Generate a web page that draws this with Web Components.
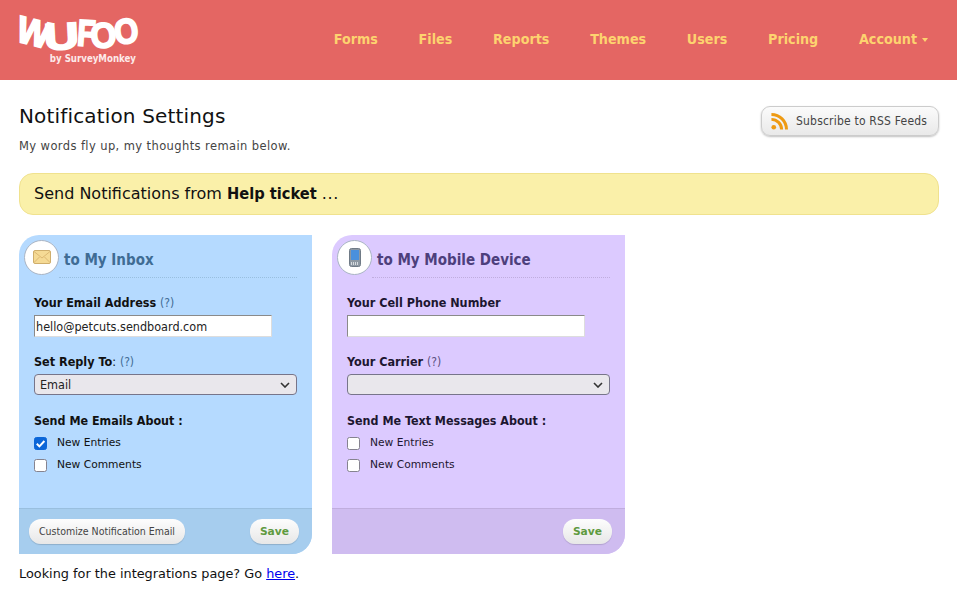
<!DOCTYPE html>
<html lang="en">
<head>
<meta charset="utf-8">
<title>Notification Settings</title>
<style>
  html, body { margin: 0; background: #fff; }
  body { font-family: "DejaVu Sans", sans-serif; color: #111; }
</style>
</head>
<body>
<wf-header></wf-header>
<wf-page>
  <wf-title slot="title" heading="Notification Settings" sub="My words fly up, my thoughts remain below."></wf-title>
  <wf-rss slot="action">Subscribe to RSS Feeds</wf-rss>
  <wf-banner slot="banner">Send Notifications from <b>Help ticket</b> <span style="letter-spacing:.6px">...</span></wf-banner>

  <wf-card slot="cards" heading="to My Inbox" theme="inbox">
    <wf-icon slot="icon" name="mail"></wf-icon>
    <wf-field label="Your Email Address" colon="" help="(?)" type="text" value="hello@petcuts.sendboard.com"></wf-field>
    <wf-field label="Set Reply To" colon=":" help="(?)" type="select" value="Email"></wf-field>
    <wf-checks heading="Send Me Emails About :">
      <wf-check checked>New Entries</wf-check>
      <wf-check>New Comments</wf-check>
    </wf-checks>
    <wf-btn slot="footer-left">Customize Notification Email</wf-btn>
    <wf-btn slot="footer-right" save>Save</wf-btn>
  </wf-card>

  <wf-card slot="cards" heading="to My Mobile Device" theme="mobile">
    <wf-icon slot="icon" name="phone"></wf-icon>
    <wf-field label="Your Cell Phone Number" type="text" value=""></wf-field>
    <wf-field label="Your Carrier" help="(?)" type="select" value=""></wf-field>
    <wf-checks heading="Send Me Text Messages About :">
      <wf-check>New Entries</wf-check>
      <wf-check>New Comments</wf-check>
    </wf-checks>
    <wf-btn slot="footer-right" save>Save</wf-btn>
  </wf-card>

  <span slot="foot">Looking for the integrations page? Go <a href="#" style="color:#0000ee">here</a>.</span>
</wf-page>

<script>
function define(name, html) {
  customElements.define(name, class extends HTMLElement {
    connectedCallback() {
      if (this.shadowRoot) return;
      this.attachShadow({ mode: "open" });
      this.shadowRoot.innerHTML = typeof html === "function" ? html(this) : html;
    }
  });
}

const COND = `"DejaVu Sans Condensed", "DejaVu Sans", sans-serif`;
const NAV = ["Forms", "Files", "Reports", "Themes", "Users", "Pricing"];
const CHEVRON = "data:image/svg+xml," + encodeURIComponent('<svg xmlns="http://www.w3.org/2000/svg" width="10" height="6"><path d="M1 1l4 4 4-4" fill="none" stroke="#333" stroke-width="1.6"/></svg>');
const TICK = "data:image/svg+xml," + encodeURIComponent('<svg xmlns="http://www.w3.org/2000/svg" width="13" height="13"><path d="M2.8 6.8l2.6 2.6 5-5.4" fill="none" stroke="#fff" stroke-width="2"/></svg>');

define("wf-header", `
  <style>
    :host { display: flex; height: 80px; background: #e46663; justify-content: space-between; align-items: center; padding: 0 29px 0 19px; }
    .logo { display: flex; flex-direction: column; width: 120px; }
    .word { position: relative; height: 35px; color: #fff; font: 700 37px/34px "Liberation Sans", sans-serif; -webkit-text-stroke: 2px #fff; }
    .word span { position: absolute; top: 0; display: block; }
    .w { left: -3px; transform: rotate(14deg) scaleX(.95); }
    .u { left: 29px; top: 4px !important; transform: rotate(-3deg) scaleX(1.3); }
    .f { left: 56px; top: 1px !important; transform: rotate(4deg) scaleX(.8); }
    .o1 { left: 70px; top: 3px !important; transform: rotate(-6deg) scale(.9, .95); }
    .o2 { left: 93px; top: -1px !important; transform: rotate(-6deg) scale(.84, .95); }
    .by { font: 700 9.6px/12px ${COND}; color: #fdeaea; margin: 2px 3px 0 0; text-align: right; }
    nav { display: flex; gap: 40.7px; margin-top: -2px; font: 700 14.2px/18px ${COND}; color: #fdd36f; white-space: nowrap; }
    .caret { display: inline-block; width: 0; height: 0; margin-left: 5px; border: 3px solid transparent; border-top: 4px solid #fdd36f; border-bottom: 0; vertical-align: 2px; }
  </style>
  <div class="logo">
    <div class="word"><span class="w">W</span><span class="u">U</span><span class="f">F</span><span class="o1">O</span><span class="o2">O</span></div>
    <div class="by">by SurveyMonkey</div>
  </div>
  <nav>${NAV.map(n => `<div>${n}</div>`).join("")}<div>Account<span class="caret"></span></div></nav>
`);

define("wf-page", `
  <style>
    :host { display: block; padding: 26px 18px 0 19px; }
    .top { display: flex; justify-content: space-between; align-items: flex-start; height: 67px; }
    .cards { display: flex; gap: 20px; margin-top: 20px; }
    .foot { font-size: 12.85px; line-height: 16px; margin-top: 12px; color: #111; }
  </style>
  <div class="top"><slot name="title"></slot><slot name="action"></slot></div>
  <slot name="banner"></slot>
  <div class="cards"><slot name="cards"></slot></div>
  <div class="foot"><slot name="foot"></slot></div>
`);

define("wf-title", el => `
  <style>
    :host { display: block; }
    h1 { margin: -1px 0 0; font: 400 20px/22px "DejaVu Sans", sans-serif; letter-spacing: .16px; color: #111; }
    p { margin: 11px 0 0; font: 400 11.5px/16px "DejaVu Sans", sans-serif; letter-spacing: .4px; color: #444; }
  </style>
  <h1>${el.getAttribute("heading")}</h1>
  <p>${el.getAttribute("sub")}</p>
`);

define("wf-rss", `
  <style>
    :host { display: flex; align-items: center; gap: 8px; box-sizing: border-box; width: 178px; height: 30px; padding: 0 0 0 9px; border: 1px solid #ccc; border-radius: 9px;
      background: linear-gradient(#fbfbfb, #e9e9e9); box-shadow: 0 1px 2px rgba(0,0,0,.25); font: 400 12px/16px ${COND}; letter-spacing: .2px; color: #444; }
    svg { width: 17px; height: 17px; flex: none; }
  </style>
  <svg viewBox="0 0 16 16"><circle cx="2.6" cy="13.4" r="2.2" fill="#ee9a12"/><path d="M.4 6a9.6 9.6 0 0 1 9.6 9.6M.4 1.4a14.2 14.2 0 0 1 14.2 14.2" fill="none" stroke="#ee9a12" stroke-width="2.8"/></svg>
  <span><slot></slot></span>
`);

define("wf-banner", `
  <style>
    :host { display: block; box-sizing: border-box; height: 42px; padding: 0 14px; border: 1px solid #f0e28e; border-radius: 14px; background: #faf0a9; font: 400 16px/40px "DejaVu Sans", sans-serif; color: #111; }
    ::slotted(b) { font: 700 16.3px/40px ${COND}; }
  </style>
  <slot></slot>
`);

const THEMES = {
  inbox: { bg: "#b5daff", foot: "#a6cdee", line: "#99bfdf", head: "#3f6c94", help: "#3f6c94", ink: "#111" },
  mobile: { bg: "#dccaff", foot: "#cfbcf0", line: "#c0adde", head: "#4d3f7c", help: "#5b5080", ink: "#1c1630" }
};

define("wf-card", el => {
  const t = THEMES[el.getAttribute("theme")];
  return `
  <style>
    :host { display: flex; flex-direction: column; box-sizing: border-box; width: 293px; height: 319px; background: ${t.bg}; border-radius: 20px 0 20px 0; color: ${t.ink}; --help: ${t.help}; }
    header { display: flex; align-items: center; gap: 5px; height: 42px; margin: 6px 15px 0 5px; position: relative; }
    .badge { display: flex; align-items: center; justify-content: center; width: 35px; height: 35px; box-sizing: border-box; border-radius: 50%; background: #fff; border: 1px solid #a9b4c4; flex: none; margin-top: -10px; }
    h2 { margin: -4px 0 0; font: 700 15px/20px ${COND}; color: ${t.head}; }
    header::after { content: ""; position: absolute; left: 35px; right: 0; bottom: 5px; border-bottom: 1px dotted ${t.line}; }
    .body { flex: 1; padding: 12px 15px 0 15px; }
    footer { display: flex; justify-content: space-between; align-items: center; box-sizing: border-box; height: 46px; padding: 0 13px 0 10px; background: ${t.foot}; border-top: 1px solid ${t.line}; border-radius: 0 0 20px 0; }
  </style>
  <header><div class="badge"><slot name="icon"></slot></div><h2>${el.getAttribute("heading")}</h2></header>
  <div class="body"><slot></slot></div>
  <footer><div><slot name="footer-left"></slot></div><div><slot name="footer-right"></slot></div></footer>
`;
});

define("wf-icon", el => el.getAttribute("name") === "mail" ? `
  <style>:host { display: block; line-height: 0; }</style>
  <svg width="18" height="14" viewBox="0 0 18 14">
    <rect x=".5" y=".5" width="17" height="13" rx="1.5" fill="#f5da95" stroke="#cfae6c"/>
    <path d="M1 1.5 9 8l8-6.5M1 12.5 6.5 7M17 12.5 11.5 7" fill="none" stroke="#dcb872"/>
  </svg>` : `
  <style>:host { display: block; line-height: 0; }</style>
  <svg width="12" height="19" viewBox="0 0 12 19">
    <rect x=".5" y=".5" width="11" height="18" rx="2" fill="#8d98a2" stroke="#6f7a86"/>
    <rect x="2" y="2" width="8" height="10" fill="#4a90dc"/>
    <path d="M2.5 14v3M4.5 14v3M6.5 14v3M8.5 14v3" stroke="#d5dade"/>
  </svg>`);

define("wf-field", el => {
  const help = el.getAttribute("help");
  const colon = el.getAttribute("colon");
  const isSelect = el.getAttribute("type") === "select";
  const value = el.getAttribute("value");
  return `
  <style>
    :host { display: block; height: 59px; }
    label { display: block; font: 700 12.5px/16px ${COND}; margin-bottom: 4px; }
    .h { font-weight: 400; color: var(--help); font-size: 12px; }
    .c { font-weight: 400; }
    input { display: block; box-sizing: border-box; width: 238px; height: 22px; margin: 0; padding: 0 1px; border: 1px solid #8a8a8a; border-bottom-color: #ddd; border-right-color: #ddd; border-radius: 0; background: #fff; font: 400 12.5px ${COND}; color: #222; outline: none; }
    select { display: block; box-sizing: border-box; width: 263px; height: 21px; margin: 0; padding: 0 5px; appearance: none; border: 1px solid #77758a; border-radius: 4px; background: #e9e7ec url('${CHEVRON}') no-repeat right 6px center; font: 400 12.5px ${COND}; color: #222; }
  </style>
  <label>${el.getAttribute("label")}${colon ? `<span class="c">${colon}</span>` : ""}${help ? ` <span class="h">${help}</span>` : ""}</label>
  ${isSelect ? `<select><option>${value}</option></select>` : `<input type="text" value="${value}">`}
`;
});

define("wf-checks", el => `
  <style>
    :host { display: flex; flex-direction: column; gap: 4px; }
    .t { font: 700 12.4px/16px ${COND}; margin-bottom: 2px; }
  </style>
  <div class="t">${el.getAttribute("heading")}</div>
  <slot></slot>
`);

define("wf-check", el => `
  <style>
    :host { display: flex; align-items: flex-start; gap: 10px; height: 18px; font: 400 10.7px/13px "DejaVu Sans", sans-serif; }
    input { appearance: none; box-sizing: border-box; margin: 2px 0 0; width: 13px; height: 13px; flex: none; background: #fff; border: 1.5px solid #85838f; border-radius: 2.5px; }
    input:checked { background: #0b66d8 url('${TICK}') no-repeat center; border-color: #0b66d8; }
    span { margin-top: 1px; }
  </style>
  <input type="checkbox" ${el.hasAttribute("checked") ? "checked" : ""}><span><slot></slot></span>
`);

define("wf-btn", el => `
  <style>
    :host { display: inline-flex; align-items: center; justify-content: center; box-sizing: border-box; height: 25px; padding: 0 10px 1px; border-radius: 12px; background: linear-gradient(#fdfdfd, #e7e7e7); box-shadow: 0 1px 1px rgba(0,0,0,.15);
      font: ${el.hasAttribute("save") ? `700 10.7px "DejaVu Sans"` : `400 10.5px "DejaVu Sans Condensed"`}, sans-serif; color: ${el.hasAttribute("save") ? "#5f9a3f" : "#444"}; }
  </style>
  <slot></slot>
`);
</script>
</body>
</html>
